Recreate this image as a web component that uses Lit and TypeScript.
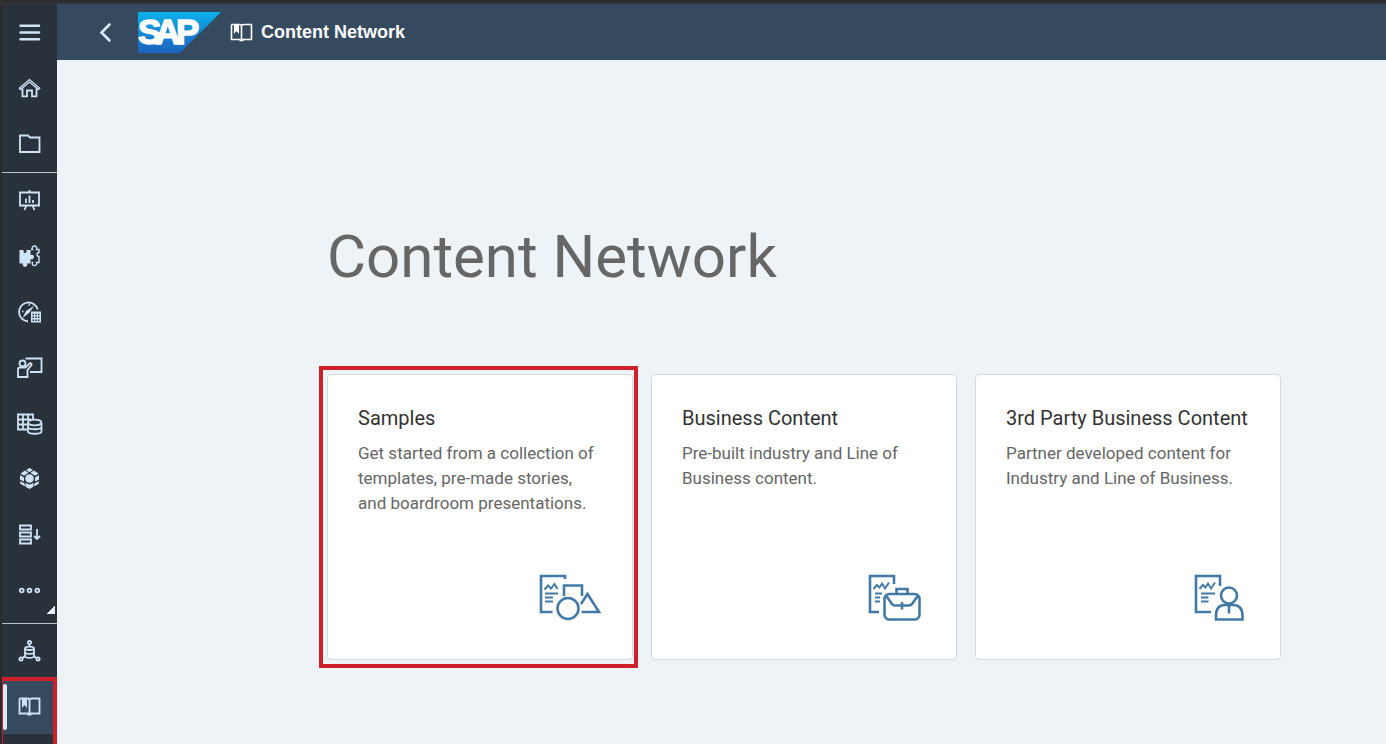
import { LitElement, html, svg, css } from "lit";
import { customElement } from "lit/decorators.js";

const book = svg`
  <path d="M3.500 5.500H11.500Q13.500 5.500 13.500 7.500V21M13.500 7.500Q13.500 5.500 15.500 5.500H23.500V20.500H3.500V5.500M11.500 21.500H15.500"/>
  <path d="M6 5.500V15L8.500 12L11 15V5.500Z" fill="currentColor" stroke="none"/>`;

const icons = {
  menu: svg`<path stroke-width="2.500" stroke-linecap="round" d="M4.500 6.700H23M4.500 13.500H23M4.500 20.300H23"/>`,
  home: svg`<path d="M3.300 13.300L13.500 4.500L23.700 13.300L22.500 14.500L13.500 7L4.500 14.500Z" stroke-width="1.300"/>
    <path d="M6.500 13.500V21.300H11V15.500H16V21.300H20.500V13.500"/>`,
  folder: svg`<path d="M4 21V4.500H12L14 6.500H23.500V21Z"/>`,
  stories: svg`<path d="M4 5.500H23V18.500H4ZM13.500 3V5M10.500 18.500L8.500 23M16.500 18.500L18.500 23M10 11.500V16M13.500 8.500V16M17 13V16"/>`,
  puzzle: svg`<path fill="currentColor" stroke="none" d="M3.500 7H7.500V8.500A1.500 1.500 0 0 0 10.500 8.500V7H14.500V12A2.300 2.300 0 1 1 14.500 16V20.500H11A2.300 2.300 0 1 1 7 20.500H3.500Z"/>
    <path stroke-width="1.400" d="M15 6.500H16.500A2.300 2.300 0 1 1 20.500 6.500H23V9.500A2 2 0 1 0 23 13.500V19.500H20.500A2.200 2.200 0 1 1 16.500 19.500H15.500"/>`,
  explore: svg`<path d="M12 22.500A9.500 9.500 0 1 1 21.700 10.500"/>
    <path d="M6.500 19L10 12L18.500 6.500L13 14Z" fill="currentColor" stroke="none"/>
    <path stroke-width="1.400" d="M12.500 6H14M6 12.500H7.500"/>
    <path d="M15 12.500H25V23.500H15Z" fill="currentColor" stroke="none"/>
    <path d="M16.500 15.500H23.500M16.500 18.300H23.500M16.500 21.200H23.500" stroke="#29313a" stroke-width="1.500" stroke-dasharray="1.500 1.200"/>`,
  present: svg`<circle cx="6.500" cy="9.500" r="3"/><path d="M9.500 4.500H25.500V18H14M2 23V15.500Q2 13.500 4 13.500H9.500L14 9.200Q16 9 15.500 11L11.500 16V23Z"/>`,
  dataset: svg`<path d="M11 19.500H2V4.500H17V9.500M2 9.500H15M2 14.500H11M7 4.500V19.500M12 4.500V10"/>
    <path d="M12 13V21.500C12 24.500 25.500 24.500 25.500 21.500V13M12 17C12 20 25.500 20 25.500 17"/><ellipse cx="18.700" cy="12.500" rx="6.700" ry="2.800"/>`,
  hexagon: svg`<g fill="currentColor" stroke="none">
      <circle cx="13.500" cy="13.500" r="4.300"/>
      <path d="M13.500 3L17 5L13.500 7.200L10 5ZM9 5.500L12.500 7.800L8 10.800L4.500 8.500ZM18 5.500L22.500 8.500L19 10.800L14.500 7.800ZM4 10L8 12.500V16.500L4 14.800ZM23 10L19 12.500V16.500L23 14.800ZM4 16.300L8 18L9.500 21.800L4.500 19ZM23 16.300L19 18L17.500 21.800L22.500 19ZM9 18L13.500 19.500L18 18L17 22L13.500 24L10 22Z"/></g>`,
  datalist: svg`<path d="M4 4.500H15V8.500H4ZM4 11.500H15V15.500H4ZM4 18.500H15V22.500H4ZM21 8V18M18 15L21 18L24 15"/>`,
  more: svg`<circle cx="5.700" cy="13.500" r="1.900"/><circle cx="13.500" cy="13.500" r="1.900"/><circle cx="21.300" cy="13.500" r="1.900"/>`,
  connect: svg`<circle cx="13.500" cy="4.500" r="1.600"/><circle cx="5" cy="21" r="1.600"/><circle cx="22" cy="21" r="1.600"/>
    <path d="M13.500 6V8M9 18L6.500 20M18 18L20.500 20"/><ellipse cx="13.500" cy="10.300" rx="4.500" ry="1.700"/>
    <path d="M9 10.500V18C9 20.500 18 20.500 18 18V10.500M9 14C9 16.500 18 16.500 18 14"/>`,
  book,
};

const glyph = (art: unknown) => html`<svg class="glyph" viewBox="0 0 27 27" aria-hidden="true">${art}</svg>`;

const cards = [
  {
    title: "Samples",
    text: "Get started from a collection of templates, pre-made stories, and boardroom presentations.",
    marked: true,
    width: 63,
    art: svg`<path stroke-width="2.600" d="M26 5V2H2V38H13.500"/><path stroke-width="2" d="M5.500 15.500L9 11.500L12 14.500L15.500 10L18.500 15"/>
      <path stroke-width="2" d="M6 19.500H19M6 23.500H14M6 27.500H14"/>
      <path stroke-width="2.600" d="M25 22V11.500H43V22"/><circle cx="29" cy="34.500" r="10.500" stroke-width="2.600"/>
      <path stroke-width="2.600" d="M42 30L48.500 20L60 38H42.500"/>`,
  },
  {
    title: "Business Content",
    text: "Pre-built industry and Line of Business content.",
    marked: false,
    width: 58,
    art: svg`<path stroke-width="2.600" d="M26 10V2H2V38H11"/><path stroke-width="1.900" d="M5.500 15L9 11L11.500 13.500L14 9.500L17 14.500L21 8.500"/>
      <path stroke-width="2" d="M7 19.500H14M7 23.500H12M7 27.500H12"/>
      <rect x="16.500" y="20" width="35" height="25.500" rx="5" stroke-width="2.600"/>
      <path stroke-width="2.600" d="M28.500 20V15H39.500V20M18 21.500L24 30Q25 31.500 27 31.500H41Q43 31.500 44 30L50 21.500M34 28V35.500"/>`,
  },
  {
    title: "3rd Party Business Content",
    text: "Partner developed content for Industry and Line of Business.",
    marked: false,
    width: 56,
    art: svg`<path stroke-width="2.600" d="M26 12V2H2V38H17"/><path stroke-width="1.900" d="M5.500 15L9 11L11.500 13.500L14 9.500L17 14.500L21 8.500"/>
      <path stroke-width="2" d="M7 19.500H21M7 23.500H14.500M7 27.500H14.500"/>
      <circle cx="35" cy="21.500" r="8" stroke-width="2.600"/>
      <path stroke-width="2.600" d="M22 45.500V42Q22 31 31 31H39Q48.500 31 48.500 42V45.500ZM35 31V39.500"/>`,
  },
];

@customElement("app-root")
export class AppRoot extends LitElement {
  static styles = css`
    :host {
      display: flex;
      flex-direction: column;
      height: 100vh;
      overflow: hidden;
      background: #eef3f8;
      font-family: Roboto, "Noto Sans", sans-serif;
      color: #333;
    }
    * { box-sizing: border-box; }
    button { border: 0; padding: 0; background: none; color: inherit; font: inherit; cursor: pointer; }
    .strip { flex: none; height: 4px; background: linear-gradient(#2d2d2e 50%, #323a42); }
    .shell { flex: 1; display: flex; min-height: 0; }
    .side {
      flex: none;
      width: 57px;
      border-left: 2px solid #2b2b2c;
      background: #29313a;
      color: #cfe3f7;
      overflow: hidden;
    }
    .group { display: flex; flex-direction: column; }
    .group + .group { border-top: 1px solid #b9c0c8; }
    .tools { height: 451px; padding-bottom: 5px; }
    .tools .item { flex: 1; }
    .item { position: relative; display: flex; height: 56px; width: 100%; align-items: center; justify-content: center; }
    .low .item { height: 55px; }
    .glyph { width: 27px; height: 27px; fill: none; stroke: currentColor; stroke-width: 1.8; }
    .corner { position: absolute; right: 2px; bottom: 4px; width: 8px; height: 8px; background: linear-gradient(135deg, transparent 50%, #e6f1fb 50%); }
    .active { background: #354a5f; }
    .active::before { content: ""; position: absolute; left: 1px; top: 5px; bottom: 4px; width: 4px; border-radius: 2px; background: #d8eafc; }
    .active::after { content: ""; position: absolute; left: -2px; right: 0; top: -2px; bottom: -20px; border: 4px solid #cf1f2b; border-left-width: 3px; }
    .page { flex: 1; min-width: 0; }
    .bar { display: flex; align-items: center; height: 56px; padding-left: 39px; background: #354a5f; color: #fff; }
    .back { width: 20px; height: 24px; margin-right: 22px; }
    .back svg { display: block; width: 20px; height: 24px; }
    .logo { width: 83px; height: 41px; margin-right: 7px; }
    .logo text { font-family: "Liberation Sans", Arial, sans-serif; font-weight: 700; font-size: 35px; }
    .bar .glyph { stroke-width: 1.6; }
    .crumb { margin: 0 0 0 6px; font: 700 18px/24px "Liberation Sans", Arial, sans-serif; }
    .content { padding: 161px 105px 0 270px; }
    .heading { margin: 0; font-size: 60px; line-height: 72px; font-weight: 400; color: #666; }
    .cards { display: grid; grid-template-columns: repeat(3, 1fr); gap: 18px; margin-top: 81px; }
    .card {
      position: relative;
      display: flex;
      flex-direction: column;
      min-height: 286px;
      padding: 29px 30px 37px;
      border: 1px solid #d3dae0;
      border-radius: 4px;
      background: #fff;
      color: #666;
      text-decoration: none;
    }
    .marked::after { content: ""; position: absolute; inset: -9px -6px -9px -9px; border: 4px solid #cf1f2b; }
    .name { margin: 0; font-size: 20px; line-height: 28px; font-weight: 400; color: #333; }
    .text { margin: 9px 0 0; font-size: 17px; line-height: 25px; }
    .art { align-self: flex-end; margin-top: auto; height: 48px; fill: none; stroke: #437aa5; }
  `;

  item(name: keyof typeof icons, label: string, extra: unknown = "") {
    return html`<button class="item" aria-label=${label}>${glyph(icons[name])}${extra}</button>`;
  }

  render() {
    return html`
      <div class="strip"></div>
      <div class="shell">
        <nav class="side" aria-label="Main">
          <div class="group">
            ${this.item("menu", "Menu")}${this.item("home", "Home")}${this.item("folder", "Files")}
          </div>
          <div class="group tools">
            ${this.item("stories", "Stories")}${this.item("puzzle", "Applications")}
            ${this.item("explore", "Data Analyzer")}${this.item("present", "Digital Boardroom")}
            ${this.item("dataset", "Datasets")}${this.item("hexagon", "Modeler")}
            ${this.item("datalist", "Data Actions")}
            ${this.item("more", "More", html`<span class="corner"></span>`)}
          </div>
          <div class="group low">
            ${this.item("connect", "Connections")}
            <button class="item active" aria-label="Content Network" aria-current="page">${glyph(icons.book)}</button>
          </div>
        </nav>
        <div class="page">
          <header class="bar">
            <button class="back" aria-label="Back">
              <svg viewBox="0 0 20 24"><path d="M13.500 4.500L5.500 12.500L13.500 20.500" fill="none" stroke="#d8eafc" stroke-width="2.600" stroke-linecap="round" /></svg>
            </button>
            <svg class="logo" viewBox="0 0 83 41" role="img" aria-label="SAP">
              <defs><linearGradient id="sap" x2="0" y2="1"><stop offset="0" stop-color="#0ab0ec" /><stop offset="1" stop-color="#1c62be" /></linearGradient></defs>
              <path d="M0 0H83L42 41H0Z" fill="url(#sap)" />
              <text y="32" x="0 17 38" fill="#fff" stroke="#fff" stroke-width="1.400">SAP</text>
            </svg>
            ${glyph(book)}
            <h2 class="crumb">Content Network</h2>
          </header>
          <main class="content">
            <h1 class="heading">Content Network</h1>
            <div class="cards">
              ${cards.map(
                (c) => html`<a class="card ${c.marked ? "marked" : ""}" href="#">
                  <h3 class="name">${c.title}</h3>
                  <p class="text">${c.text}</p>
                  <svg class="art" width=${c.width} viewBox="0 0 ${c.width} 48" aria-hidden="true">${c.art}</svg>
                </a>`
              )}
            </div>
          </main>
        </div>
      </div>
    `;
  }
}
